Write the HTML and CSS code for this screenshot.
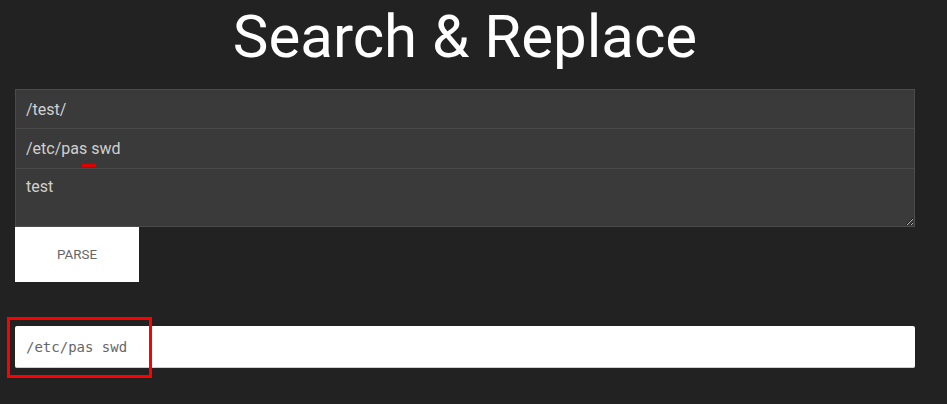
FILE: index.html
```html
<!DOCTYPE html>
<html lang="en">
<head>
<meta charset="utf-8">
<title>Search &amp; Replace</title>
<link rel="stylesheet" href="styles.css">
</head>
<body>
<main class="app">
  <h1 class="title">Search &amp; Replace</h1>
  <form class="form">
    <input class="field" type="text" value="/test/" spellcheck="false">
    <div class="field-wrap">
      <input class="field" type="text" value="/etc/pas swd" spellcheck="false">
      <span class="spell-mark"></span>
    </div>
    <textarea class="field area" spellcheck="false">test</textarea>
    <button class="parse" type="button">PARSE</button>
  </form>
  <div class="result-wrap">
    <pre class="result">/etc/pas swd</pre>
    <span class="highlight"></span>
  </div>
</main>
</body>
</html>
```

FILE: styles.css
```css
html, body {
  margin: 0;
  padding: 0;
  background: #222222;
}

body {
  font-family: Roboto, "Noto Sans", sans-serif;
  min-height: 404px;
}

.app {
  width: 900px;
  margin-left: 15px;
  padding-bottom: 36px;
  display: flex;
  flex-direction: column;
}

.title {
  margin: 1px 0 0 0;
  font-family: Roboto, sans-serif;
  font-weight: 400;
  font-size: 60px;
  line-height: normal;
  color: #ffffff;
  text-align: center;
}

.form {
  margin-top: 17px;
  display: flex;
  flex-direction: column;
}

.field-wrap {
  position: relative;
}

.field {
  display: block;
  box-sizing: border-box;
  width: 100%;
  height: 40px;
  margin: 0;
  padding: 8px 10px;
  border: 1px solid #4b4b4b;
  background: #3a3a3a;
  color: #d0d0d0;
  font-family: Roboto, sans-serif;
  font-size: 16px;
  line-height: normal;
  outline: none;
  border-radius: 0;
}

.field + .field,
.field-wrap + .field,
.field + .field-wrap .field {
  border-top: none;
}

.area {
  height: 58px;
  resize: vertical;
}

.spell-mark {
  position: absolute;
  left: 67px;
  top: 35px;
  width: 14px;
  height: 3px;
  background: #e00000;
}

.parse {
  align-self: flex-start;
  width: 124px;
  height: 55px;
  margin: 0;
  padding: 0;
  border: none;
  border-radius: 0;
  background: #ffffff;
  color: #666666;
  font-family: Roboto, sans-serif;
  font-size: 13.33px;
  cursor: pointer;
}

.result-wrap {
  position: relative;
  margin-top: 44px;
}

.result {
  box-sizing: border-box;
  margin: 0;
  height: 42px;
  padding: 0 11px;
  display: flex;
  align-items: center;
  background: #ffffff;
  border-radius: 2px;
  border-bottom: 1px solid #cfcfcf;
  color: #666666;
  font-family: "DejaVu Sans Mono", monospace;
  font-size: 14px;
}

.highlight {
  position: absolute;
  left: -8px;
  top: -9px;
  width: 139px;
  height: 55px;
  border: 3px solid #ff0000;
  box-sizing: content-box;
  pointer-events: none;
}
```
